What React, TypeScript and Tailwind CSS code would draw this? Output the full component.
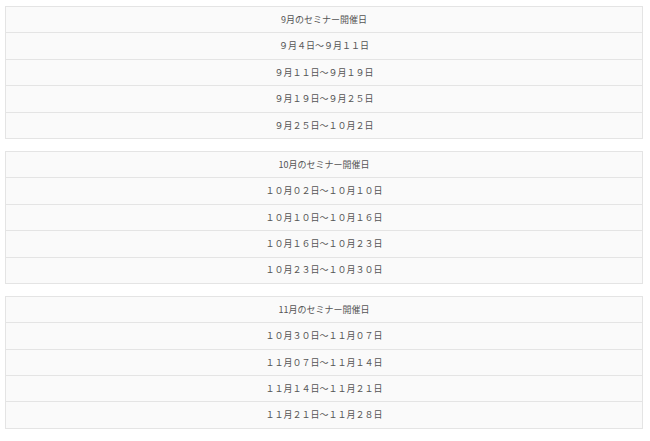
const schedules = [
  {
    title: '9月のセミナー開催日',
    dates: ['９月４日～９月１１日', '９月１１日～９月１９日', '９月１９日～９月２５日', '９月２５日～１０月２日'],
  },
  {
    title: '10月のセミナー開催日',
    dates: ['１０月０２日～１０月１０日', '１０月１０日～１０月１６日', '１０月１６日～１０月２３日', '１０月２３日～１０月３０日'],
  },
  {
    title: '11月のセミナー開催日',
    dates: ['１０月３０日～１１月０７日', '１１月０７日～１１月１４日', '１１月１４日～１１月２１日', '１１月２１日～１１月２８日'],
  },
];

const App = () => {
  return (
    <div
      className="w-[650px] h-[441px] bg-white pl-[5px] pr-[7px] pt-[6px] text-[9px] text-[#555]"
      style={{ fontFamily: '"Noto Sans CJK JP", "Noto Sans", sans-serif' }}
    >
      <div className="flex flex-col gap-[12px]">
        {schedules.map((s) => (
          <div key={s.title} className="border border-[#e4e4e4] bg-[#fafafa]">
            <div className="h-[25.4px] flex items-center justify-center">{s.title}</div>
            {s.dates.map((d) => (
              <div key={d} className="h-[26.4px] flex items-center justify-center border-t border-[#e4e4e4]">
                {d}
              </div>
            ))}
          </div>
        ))}
      </div>
    </div>
  );
};

export default App;
